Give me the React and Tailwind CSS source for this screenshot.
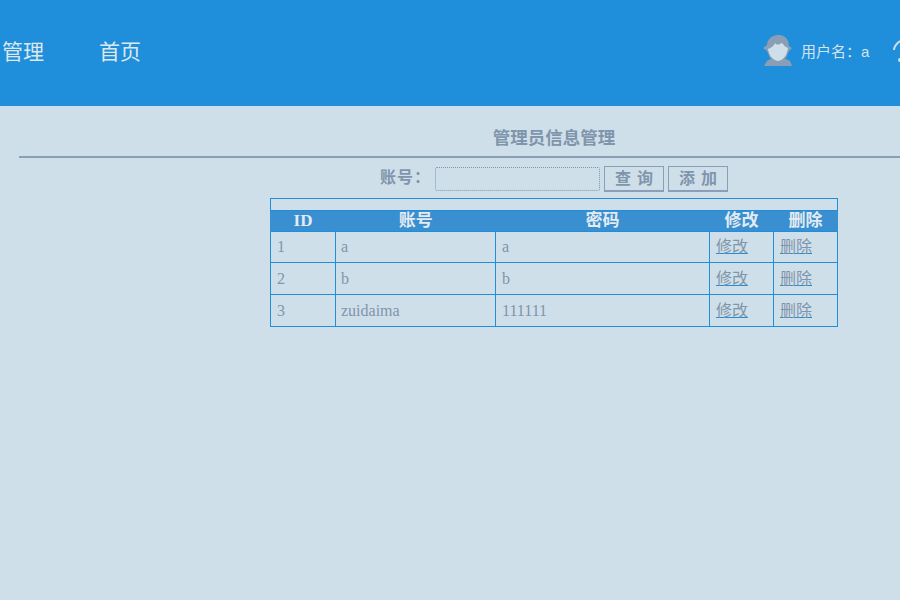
const rows = [
  { id: "1", name: "a", pwd: "a", height: "h-[31px]" },
  { id: "2", name: "b", pwd: "b", height: "h-[32px]" },
  { id: "3", name: "zuidaima", pwd: "111111", height: "h-[32px]" },
];

const serif = "font-['Liberation_Serif','Noto_Sans_CJK_SC',serif]";
const sans = "font-['Liberation_Sans','Noto_Sans_CJK_SC',sans-serif]";

const UserIcon = () => (
  <svg width="30" height="32" viewBox="0 0 30 32" className="shrink-0">
    <path d="M1 31 L4 26 L9 23 L21 23 L27 26 L29 31 Z" fill="#8a9fb5" />
    <path d="M14 0 L17 0 C23 1 26 6 26 11 L29 13 L26 16 L23 23 L7 23 L4 16 L0 13 L4 10 C4 5 8 1 14 0 Z" fill="#8a9fb5" />
    <path d="M5 14 C8 13 11 11 12 8 C14 11 17 9 19 8 C21 10 22 12 25 13 C24 20 21 25 15 26 C9 25 6 20 5 14 Z" fill="#cfdfe9" />
  </svg>
);

export default function App() {
  return (
    <div className={`h-[600px] w-[900px] overflow-hidden bg-[#cfdfe9] ${serif}`}>
      {/* Top bar */}
      <header className="flex h-[106px] items-center bg-[#1f8fdb]">
        <nav className={`flex gap-[55px] pb-[2px] pl-[2px] text-[21px] text-[#dfe7ee] ${sans}`}>
          <span>管理</span>
          <span>首页</span>
        </nav>
        <div className="ml-auto flex items-center pb-[5px]">
          <UserIcon />
          <span className={`ml-[8px] w-[92px] pt-[3px] text-[15px] text-[#d5e3ed] ${sans}`}>用户名：a</span>
          <svg width="7" height="24" viewBox="0 0 7 24" className="mb-[-2px] shrink-0">
            <path d="M7 1 C3 4 1 7 1 10" stroke="#cfdfe9" strokeWidth="2" fill="none" />
            <circle cx="7" cy="20" r="2" fill="#cfdfe9" />
          </svg>
        </div>
      </header>

      <main className="pl-[19px]">
        <h2 className="w-[1070px] pb-[7px] pt-[21px] text-center text-[17.5px] font-bold leading-[22px] text-[#7f95ac]">
          管理员信息管理
        </h2>
        <div className="h-[2px] w-[881px] bg-[#8a9fb5]" />

        {/* Search form */}
        <div className="ml-[361px] mt-[8px] flex h-[26px] items-center">
          <span className="w-[55px] pb-[2px] text-[16px] font-bold tracking-[1px] text-[#7f95ac]">账号：</span>
          <input className="mb-[1px] h-[24px] w-[165px] rounded-[2px] border border-dotted border-[#7f95ac] bg-transparent" />
          <button className="ml-[4px] h-[26px] w-[60px] border border-b-2 border-[#8a9fb5] pl-[6px] text-[16px] font-bold tracking-[6px] text-[#7f95ac]">
            查询
          </button>
          <button className="ml-[4px] h-[26px] w-[60px] border border-b-2 border-[#8a9fb5] pl-[6px] text-[16px] font-bold tracking-[6px] text-[#7f95ac]">
            添加
          </button>
        </div>

        {/* Admin table */}
        <table className="ml-[251px] mt-[6px] w-[567px] table-fixed border-collapse text-[16px] text-[#7f95ac]">
          <colgroup>
            <col className="w-[65px]" />
            <col className="w-[160px]" />
            <col className="w-[214px]" />
            <col className="w-[64px]" />
            <col className="w-[64px]" />
          </colgroup>
          <thead>
            <tr className="h-[12px]">
              <td colSpan={5} className="border border-[#1f8fdb]" />
            </tr>
            <tr className="h-[21px] bg-[#3a8fd0] text-center text-[17px] font-bold leading-[20px] text-[#e3ebf1]">
              <th className="border-x border-x-[#3a8fd0]">ID</th>
              <th>账号</th>
              <th>密码</th>
              <th>修改</th>
              <th>删除</th>
            </tr>
          </thead>
          <tbody>
            {rows.map((row) => (
              <tr key={row.id} className={row.height}>
                <td className="border border-[#1f8fdb] px-[6px] py-0 font-medium">{row.id}</td>
                <td className="border border-[#1f8fdb] px-[5px] py-0">{row.name}</td>
                <td className="border border-[#1f8fdb] px-[6px] py-0">{row.pwd}</td>
                <td className="border border-[#1f8fdb] px-[6px] py-0">
                  <a href="#" className="underline decoration-[#1f8fdb]">修改</a>
                </td>
                <td className="border border-[#1f8fdb] px-[6px] py-0">
                  <a href="#" className="underline decoration-[#1f8fdb]">删除</a>
                </td>
              </tr>
            ))}
          </tbody>
        </table>
      </main>
    </div>
  );
}
